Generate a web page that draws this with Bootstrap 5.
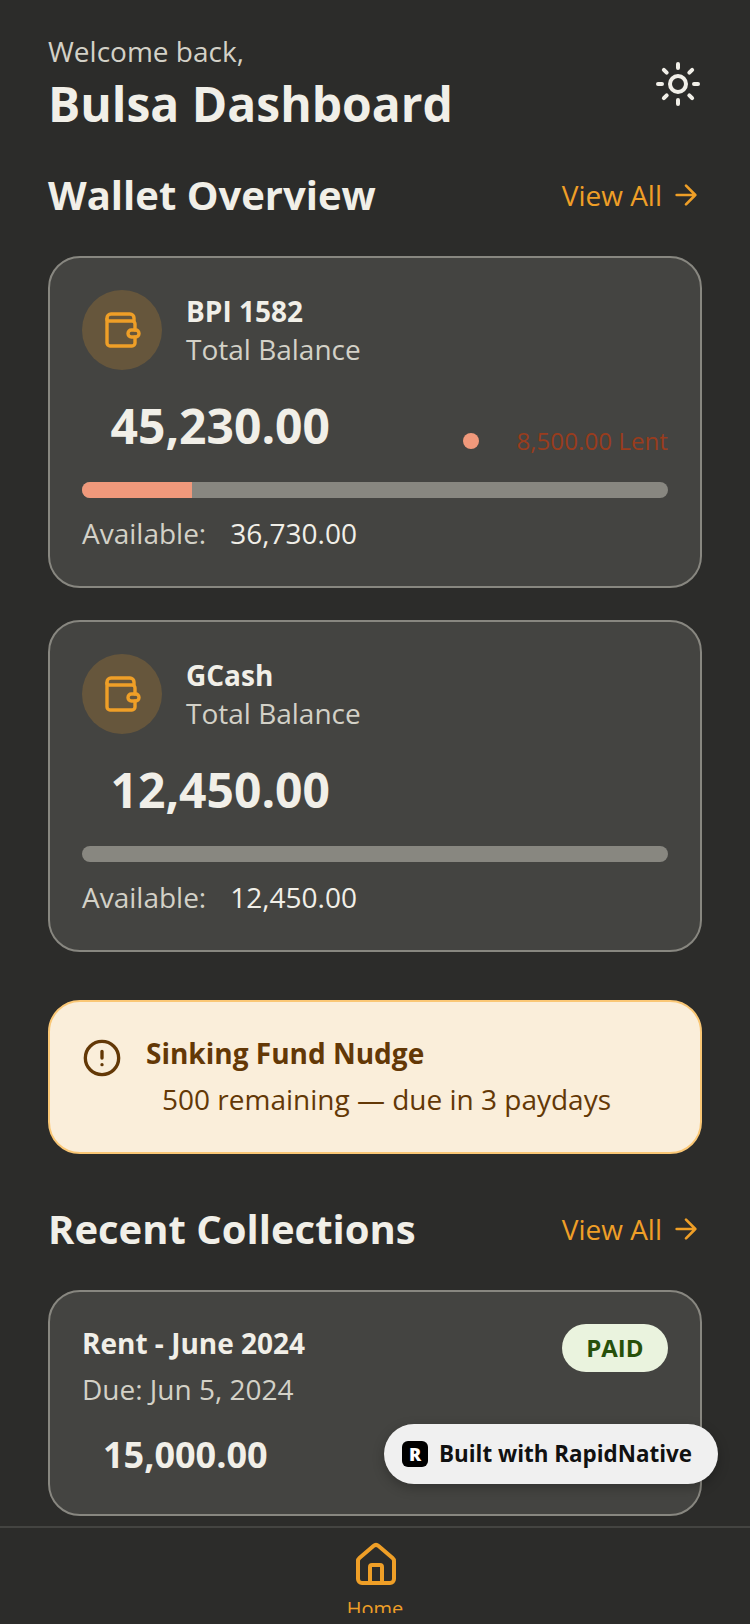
<!DOCTYPE html>
<html lang="en"><head><meta charset="utf-8"><title>Bulsa Dashboard</title>
<link href="https://cdn.jsdelivr.net/npm/bootstrap@5.3.0/dist/css/bootstrap.min.css" rel="stylesheet">
<style>
html,body{margin:0;background:#2c2c2a}
body{font-family:"Open Sans","Noto Sans",sans-serif;color:#f1efe8}
.app-shell{height:1624px;overflow:hidden;position:relative}
.app-main{height:1526px;overflow:hidden;padding:32px 48px 0}
.hello{font-size:28px;line-height:40px;color:#d3d1c7;margin-top:-1px;margin-bottom:2px}
.page-title{font-size:48px;line-height:62px;font-weight:700;margin:0}
.sun-icon{margin-top:1px}
.sec-row{height:56px}
.sec-top{margin-top:32px}
.sec-mid{margin-top:47px}
.sec-title{font-size:40px;line-height:56px;font-weight:700;margin:0}
.view-all{font-size:28px;line-height:40px;color:#ef9f27;text-decoration:none}
.wallet-card{background:#444441;border:2px solid #888780;border-radius:32px;padding:32px}
.stack-gap{margin-top:32px}
.first-gap{margin-top:33px}
.wallet-circle{width:80px;height:80px;border-radius:50%;background:rgba(239,159,39,.2)}
.acct-name{font-size:28px;line-height:38px;font-weight:700}
.acct-sub{font-size:28px;line-height:38px;color:#d3d1c7}
.amt-row{margin-top:23px}
.amt-big{font-size:48px;line-height:65px;font-weight:700;padding-left:28.5px}
.lent-wrap{margin-bottom:-1px}
.lent-dot{width:16px;height:16px;border-radius:50%;background:#f0997b;margin-bottom:10px}
.lent-txt{font-size:24.2px;line-height:36px;color:#993c1d;padding-left:37px}
.bar-track{height:16px;border-radius:8px;background:#888780;margin-top:24px}
.bar-fill{background:#f0997b;border-radius:0}
.avail{font-size:28px;line-height:38px;color:#d3d1c7;margin-top:16px;margin-bottom:2px}
.avail b{font-weight:400;color:#f1efe8;padding-left:24px}
.nudge{background:#faeeda;border:2px solid #fac775;border-radius:32px;padding:31px 32px 33px;color:#633806;margin-top:48px}
.nudge-icon{margin-top:5px}
.nudge-title{font-size:28px;line-height:40px;font-weight:700}
.nudge-sub{font-size:28px;line-height:40px;margin-top:6px;padding-left:16px}
.coll-card{padding-bottom:34px}
.coll-title{font-size:28px;line-height:40px;font-weight:700;margin-top:-1px}
.coll-due{font-size:28px;line-height:40px;color:#d3d1c7;margin-top:6px}
.coll-amt{font-size:36px;line-height:50px;font-weight:700;margin-top:21px;padding-left:21px}
.paid-pill{height:48px;padding:0 24.5px;border-radius:24px;background:#eaf3de;color:#27500a;font-size:24px;font-weight:700}
.tab-bar{height:98px;border-top:2px solid #444441;background:#2c2c2a;padding-top:13px}
.tab-clip{height:72px;overflow:hidden;color:#ef9f27}
.tab-icon{margin-left:2px}
.tab-label{font-size:20px;line-height:28px;margin-top:6px}
.built-pill{position:absolute;left:384px;top:1424px;width:334px;height:60px;border-radius:30px;background:#f0f0f0;box-shadow:0 4px 12px rgba(0,0,0,.25);color:#111;font-size:22.4px;font-weight:700;padding-left:18px;gap:11px}
.r-logo{width:26px;height:26px;border-radius:6px;background:#000;color:#fff;font-size:18px;line-height:26px;font-weight:800;text-align:center}
</style></head><body>
<div class="app-shell">
<main class="app-main">
  <div class="d-flex justify-content-between align-items-center">
    <div><div class="hello">Welcome back,</div><h1 class="page-title">Bulsa Dashboard</h1></div>
    <svg class="sun-icon" width="48" height="48" viewBox="0 0 24 24" fill="none" stroke="#f1efe8" stroke-width="2" stroke-linecap="round" stroke-linejoin="round"><circle cx="12" cy="12" r="4"/><path d="M12 2v2M12 20v2M4.93 4.93l1.41 1.41M17.66 17.66l1.41 1.41M2 12h2M20 12h2M6.34 17.66l-1.41 1.41M19.07 4.93l-1.41 1.41"/></svg>
  </div>
  <div class="d-flex justify-content-between align-items-center sec-row sec-top">
    <h2 class="sec-title">Wallet Overview</h2>
    <a class="view-all d-flex align-items-center gap-2" href="#">View All <svg width="32" height="32" viewBox="0 0 24 24" fill="none" stroke="#ef9f27" stroke-width="2" stroke-linecap="round" stroke-linejoin="round"><path d="M5 12h14M12 5l7 7-7 7"/></svg></a>
  </div>

  <section class="wallet-card first-gap">
    <div class="d-flex align-items-center gap-4">
      <div class="wallet-circle d-flex align-items-center justify-content-center">
        <svg width="40" height="40" viewBox="0 0 40 40" fill="none" stroke="#ef9f27" stroke-width="3.4" stroke-linecap="round" stroke-linejoin="round"><path d="M32 11V8a4 4 0 0 0-4-4H9a4 4 0 0 0-4 4v25a3 3 0 0 0 3 3h22a3 3 0 0 0 3-3v-6"/><path d="M5 9a2 2 0 0 0 2 2h23a3 3 0 0 1 3 3v6"/><rect x="26" y="20" width="11" height="7" rx="3.4"/></svg>
      </div>
      <div><div class="acct-name">BPI 1582</div><div class="acct-sub">Total Balance</div></div>
    </div>
    <div class="d-flex justify-content-between align-items-end amt-row">
      <div class="amt-big">45,230.00</div>
      <div class="d-flex align-items-end lent-wrap"><span class="lent-dot"></span><span class="lent-txt">8,500.00 Lent</span></div>
    </div>
    <div class="progress bar-track"><div class="progress-bar bar-fill" style="width:18.8%"></div></div>
    <div class="avail">Available:<b>36,730.00</b></div>
  </section>

  <section class="wallet-card stack-gap">
    <div class="d-flex align-items-center gap-4">
      <div class="wallet-circle d-flex align-items-center justify-content-center">
        <svg width="40" height="40" viewBox="0 0 40 40" fill="none" stroke="#ef9f27" stroke-width="3.4" stroke-linecap="round" stroke-linejoin="round"><path d="M32 11V8a4 4 0 0 0-4-4H9a4 4 0 0 0-4 4v25a3 3 0 0 0 3 3h22a3 3 0 0 0 3-3v-6"/><path d="M5 9a2 2 0 0 0 2 2h23a3 3 0 0 1 3 3v6"/><rect x="26" y="20" width="11" height="7" rx="3.4"/></svg>
      </div>
      <div><div class="acct-name">GCash</div><div class="acct-sub">Total Balance</div></div>
    </div>
    <div class="d-flex amt-row"><div class="amt-big">12,450.00</div></div>
    <div class="progress bar-track"></div>
    <div class="avail">Available:<b>12,450.00</b></div>
  </section>

  <section class="nudge d-flex gap-4">
    <svg class="flex-shrink-0 nudge-icon" width="40" height="40" viewBox="0 0 24 24" fill="none" stroke="#633806" stroke-width="2" stroke-linecap="round" stroke-linejoin="round"><circle cx="12" cy="12" r="10"/><path d="M12 8v4M12 16h.01"/></svg>
    <div><div class="nudge-title">Sinking Fund Nudge</div><div class="nudge-sub">500 remaining — due in 3 paydays</div></div>
  </section>

  <div class="d-flex justify-content-between align-items-center sec-row sec-mid">
    <h2 class="sec-title">Recent Collections</h2>
    <a class="view-all d-flex align-items-center gap-2" href="#">View All <svg width="32" height="32" viewBox="0 0 24 24" fill="none" stroke="#ef9f27" stroke-width="2" stroke-linecap="round" stroke-linejoin="round"><path d="M5 12h14M12 5l7 7-7 7"/></svg></a>
  </div>

  <section class="wallet-card coll-card first-gap">
    <div class="d-flex justify-content-between align-items-start">
      <div><div class="coll-title">Rent - June 2024</div><div class="coll-due">Due: Jun 5, 2024</div></div>
      <div class="paid-pill d-flex align-items-center">PAID</div>
    </div>
    <div class="coll-amt">15,000.00</div>
  </section>
</main>
<nav class="tab-bar">
  <div class="tab-clip d-flex flex-column align-items-center">
    <svg class="flex-shrink-0 tab-icon" width="48" height="48" viewBox="0 0 24 24" fill="none" stroke="#ef9f27" stroke-width="2" stroke-linecap="round" stroke-linejoin="round"><path d="M15 21v-8a1 1 0 0 0-1-1h-4a1 1 0 0 0-1 1v8"/><path d="M3 10a2 2 0 0 1 .709-1.528l7-5.999a2 2 0 0 1 2.582 0l7 5.999A2 2 0 0 1 21 10v9a2 2 0 0 1-2 2H5a2 2 0 0 1-2-2z"/></svg>
    <div class="tab-label">Home</div>
  </div>
</nav>
<div class="built-pill d-flex align-items-center"><span class="r-logo">R</span><span>Built with RapidNative</span></div>
</div>
<script src="https://cdn.jsdelivr.net/npm/bootstrap@5.3.0/dist/js/bootstrap.bundle.min.js"></script>
</body></html>
